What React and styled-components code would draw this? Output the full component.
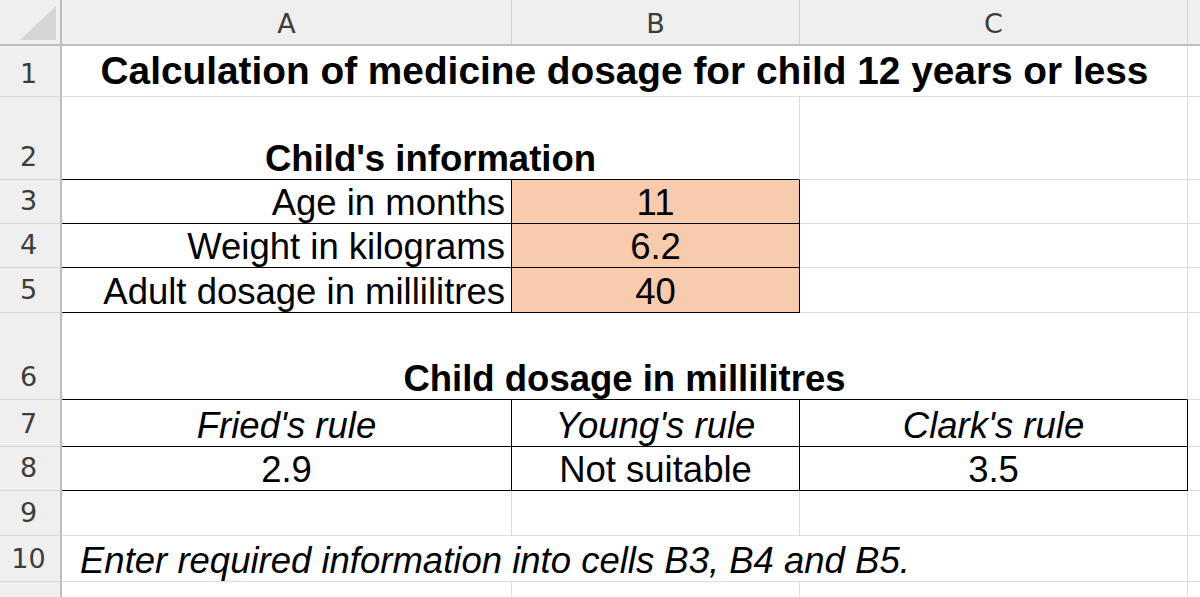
import React from "react";
import styled, { createGlobalStyle, css } from "styled-components";

const Global = createGlobalStyle`
  html, body { margin: 0; padding: 0; background: #ffffff; overflow: hidden; }
  #root { width: 1200px; height: 597px; }
`;

const GRID = "#dcdcdc";
const INK = "#000000";

const Sheet = styled.div`
  display: grid;
  width: 1200px;
  height: 597px;
  grid-template-columns: 62px 450px 288px 388px 1fr;
  grid-template-rows: 46px 51px 83px 44px 44px 45px 87px 47px 44px 45px 46px 1fr;
  overflow: hidden;
  font-family: "Liberation Sans", Arial, sans-serif;
  color: #000;
`;

const Corner = styled.div`
  position: relative;
  background: #efefef;
  border-right: 2px solid #bdbdbd;
  border-bottom: 2px solid #bdbdbd;
  box-sizing: border-box;
  &::after {
    content: "";
    position: absolute;
    right: 4px;
    bottom: 4px;
    width: 36px;
    height: 34px;
    background: #d5d5d5;
    clip-path: polygon(100% 0, 100% 100%, 0 100%);
  }
`;

const headFont = css`
  font-family: "DejaVu Sans", "Noto Sans", sans-serif;
  font-weight: 400;
  font-size: 27px;
  color: #3c3c3c;
`;

const ColHead = styled.div`
  ${headFont}
  background: #efefef;
  border-right: 1px solid #d2d2d2;
  border-bottom: 2px solid #bdbdbd;
  box-sizing: border-box;
  display: flex;
  align-items: center;
  justify-content: center;
  padding-top: 2px;
`;

const RowHead = styled.div`
  ${headFont}
  background: #efefef;
  border-right: 2px solid #bdbdbd;
  border-bottom: ${(p) => (p.$last ? "none" : "1px solid #d6d6d6")};
  box-sizing: border-box;
  display: flex;
  align-items: flex-end;
  justify-content: center;
  line-height: 27px;
  padding-bottom: 9px;
  padding-right: 3px;
`;

const Cell = styled.div`
  grid-column: span ${(p) => p.$span || 1};
  box-sizing: border-box;
  display: flex;
  align-items: flex-end;
  justify-content: ${(p) =>
    p.$align === "right" ? "flex-end" : p.$align === "left" ? "flex-start" : "center"};
  background: ${(p) => p.$fill || "#ffffff"};
  border-right: 1px solid ${(p) => (p.$right === "ink" ? INK : p.$right === "none" ? "transparent" : GRID)};
  border-bottom: 1px solid ${(p) => (p.$bottom === "ink" ? INK : p.$bottom === "none" ? "transparent" : GRID)};
  font-size: 36.5px;
  line-height: 36.5px;
  padding: 0 6px 2px 6px;
  white-space: nowrap;
  ${(p) =>
    p.$bold &&
    css`
      font-weight: 700;
    `}
  ${(p) =>
    p.$italic &&
    css`
      font-style: italic;
    `}
`;

const Title = styled(Cell)`
  font-size: 38.8px;
  line-height: 38.8px;
  padding-bottom: 5px;
`;

const Note = styled(Cell)`
  padding-left: 18px;
`;

const PEACH = "#f8cbad";

export default function App() {
  return (
    <>
      <Global />
      <Sheet>
        <Corner />
        <ColHead>A</ColHead>
        <ColHead>B</ColHead>
        <ColHead>C</ColHead>
        <ColHead />

        <RowHead>1</RowHead>
        <Title $span={3} $bold>
          Calculation of medicine dosage for child 12 years or less
        </Title>
        <Cell />

        <RowHead>2</RowHead>
        <Cell $span={2} $bold $bottom="ink">
          Child's information
        </Cell>
        <Cell />
        <Cell />

        <RowHead>3</RowHead>
        <Cell $align="right" $right="ink" $bottom="ink">Age in months</Cell>
        <Cell $fill={PEACH} $right="ink" $bottom="ink">11</Cell>
        <Cell />
        <Cell />

        <RowHead>4</RowHead>
        <Cell $align="right" $right="ink" $bottom="ink">Weight in kilograms</Cell>
        <Cell $fill={PEACH} $right="ink" $bottom="ink">6.2</Cell>
        <Cell />
        <Cell />

        <RowHead>5</RowHead>
        <Cell $align="right" $right="ink" $bottom="ink">Adult dosage in millilitres</Cell>
        <Cell $fill={PEACH} $right="ink" $bottom="ink">40</Cell>
        <Cell />
        <Cell />

        <RowHead>6</RowHead>
        <Cell $span={3} $bold $bottom="ink">
          Child dosage in millilitres
        </Cell>
        <Cell />

        <RowHead>7</RowHead>
        <Cell $italic $right="ink" $bottom="ink">Fried's rule</Cell>
        <Cell $italic $right="ink" $bottom="ink">Young's rule</Cell>
        <Cell $italic $right="ink" $bottom="ink">Clark's rule</Cell>
        <Cell />

        <RowHead>8</RowHead>
        <Cell $right="ink" $bottom="ink">2.9</Cell>
        <Cell $right="ink" $bottom="ink">Not suitable</Cell>
        <Cell $right="ink" $bottom="ink">3.5</Cell>
        <Cell />

        <RowHead>9</RowHead>
        <Cell />
        <Cell />
        <Cell />
        <Cell />

        <RowHead>10</RowHead>
        <Note $span={3} $italic $align="left">
          Enter required information into cells B3, B4 and B5.
        </Note>
        <Cell />

        <RowHead $last />
        <Cell $bottom="none" />
        <Cell $bottom="none" />
        <Cell $bottom="none" />
        <Cell $bottom="none" />
      </Sheet>
    </>
  );
}
